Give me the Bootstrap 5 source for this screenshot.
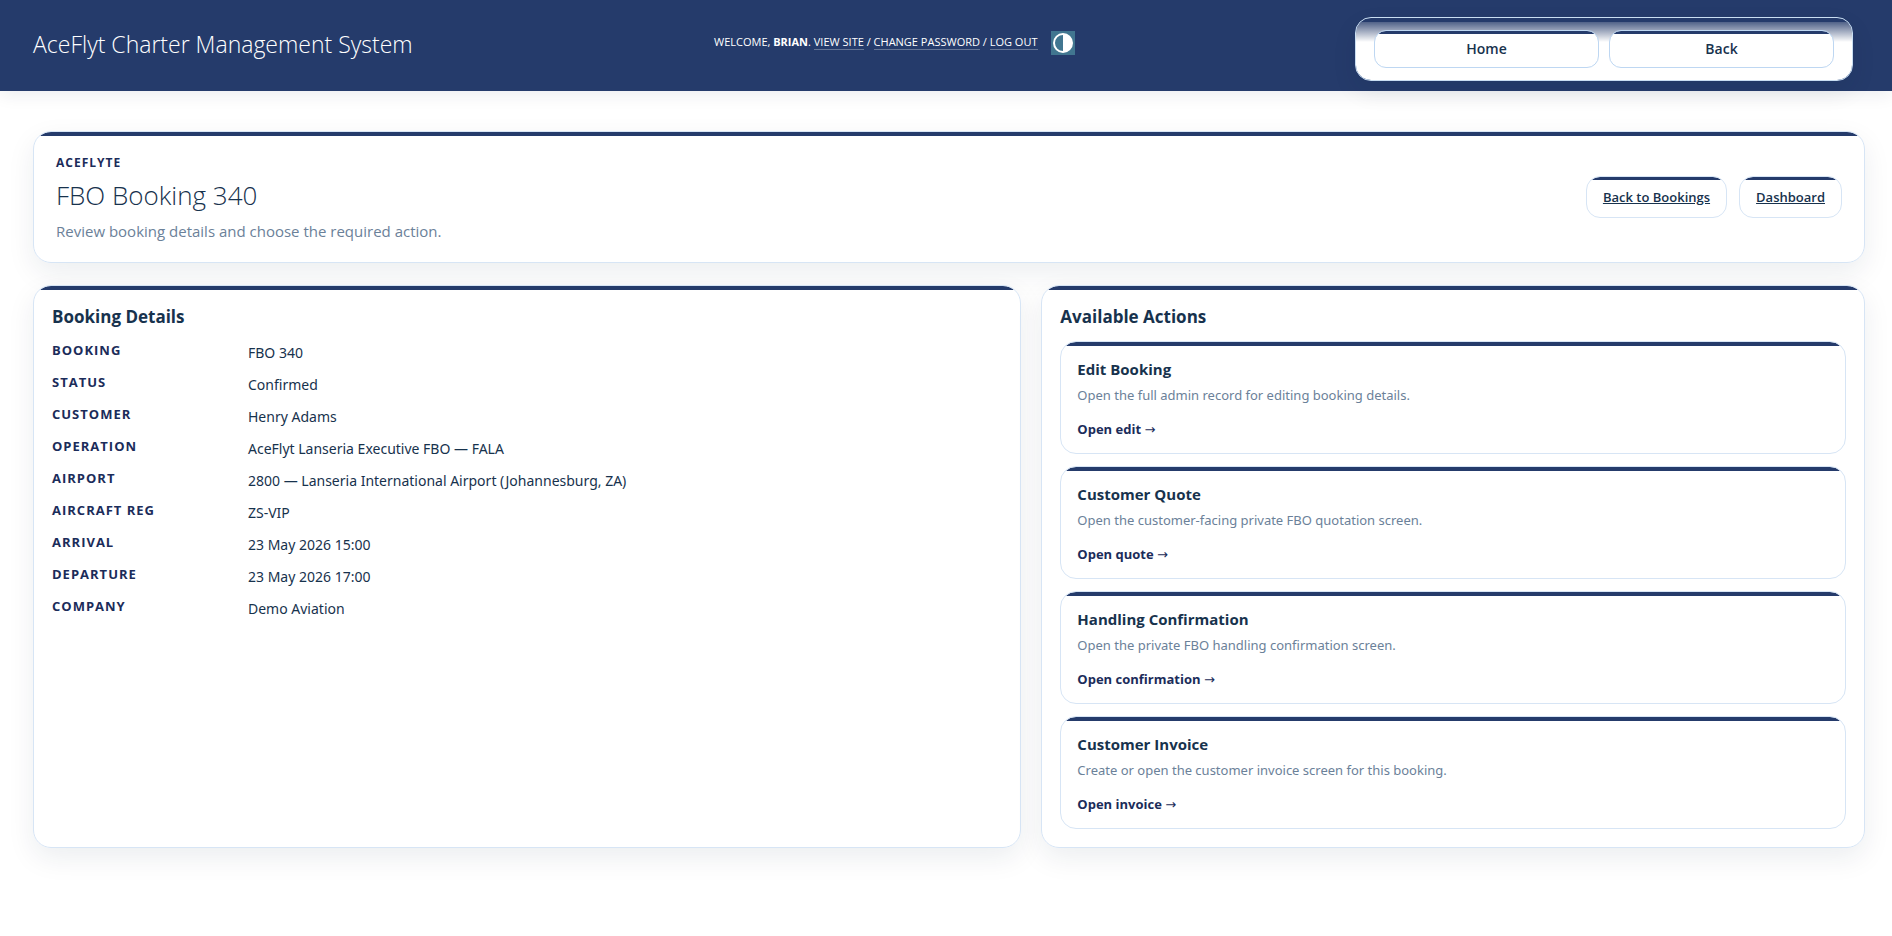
<!DOCTYPE html>
<html lang="en">
<head>
<meta charset="utf-8">
<meta name="viewport" content="width=device-width, initial-scale=1">
<title>FBO Booking 340 | AceFlyt Charter Management System</title>
<link href="https://cdn.jsdelivr.net/npm/bootstrap@5.3.0/dist/css/bootstrap.min.css" rel="stylesheet">
<style>
  :root { --navy: #253b6b; --ink: #17324d; --deep: #1b2c5a; --soft: #6b8199; --line: #d7e5f5; }
  body { font-family: "Open Sans", "Noto Sans", sans-serif; font-size: 14px; color: var(--ink); background: #fff; }
  .site-header { display: grid; grid-template-columns: 681fr 641fr 498fr; height: 91px; padding: 0 39px 0 33px; background: var(--navy); box-shadow: 0 4px 16px rgba(15, 35, 60, .08); }
  .site-title { font-size: 23px; font-weight: 300; line-height: 30px; color: #fff; padding-top: 29px; }
  .user-tools { font-size: 11px; line-height: 14px; color: #fff; padding-top: 31px; text-transform: uppercase; }
  .user-tools a { color: #fff; text-decoration: none; border-bottom: 1px solid rgba(255, 255, 255, .3); }
  .theme-toggle { width: 24px; height: 24px; background: #417690; margin-left: 13px; }
  .theme-toggle svg { display: block; }
  .surface { border: 1px solid var(--line); background: linear-gradient(var(--navy) 0 4px, #fff 4px) padding-box; }
  .raised { border-radius: 18px; box-shadow: 0 10px 28px rgba(15, 35, 60, .08); }
  .nav-panel { margin-top: 17px; height: 64px; padding: 12px 18px; gap: 10px; border: 1px solid #c9def2; border-radius: 16px; background: linear-gradient(var(--navy) 0 4px, rgba(255, 255, 255, .2) 4px, #fff 24px) padding-box; box-shadow: 0 10px 24px rgba(15, 35, 60, .09); }
  .nav-panel button { flex: 1 1 0; padding: 0 0 2px; color: var(--ink); font-size: 14px; font-weight: 600; border: 1px solid #bed7f2; border-radius: 12px; background: linear-gradient(var(--navy) 0 3px, #fff 3px) padding-box; }
  .page-body { padding: 40px 27px 40px 33px; }
  .hero { padding: 20px 22px; margin-bottom: 22px; }
  .eyebrow { font-size: 12px; line-height: 22px; font-weight: 700; letter-spacing: 1px; color: var(--deep); }
  .hero h1 { font-size: 26px; line-height: 34px; font-weight: 300; margin: 4px 0 8px; }
  .hero p { font-size: 15px; line-height: 22px; color: var(--soft); margin: 0; }
  .hero-link { font-size: 13px; line-height: 20px; font-weight: 600; color: var(--ink); padding: 10px 16px; border: 1px solid var(--line); border-radius: 14px; background: linear-gradient(var(--navy) 0 3px, #fff 3px) padding-box; }
  .panels { display: grid; grid-template-columns: 12fr 10fr; gap: 20px; }
  .panel { padding: 18px; }
  .panel h2 { font-size: 17px; line-height: 26px; font-weight: 700; margin: 0 0 11px; }
  .facts { display: grid; grid-template-columns: 180px 1fr; grid-auto-rows: 32px; column-gap: 16px; margin: 0; }
  .facts dt { font-size: 13px; line-height: 18px; font-weight: 700; letter-spacing: 1px; text-transform: uppercase; color: var(--deep); }
  .facts dd { font-family: "Noto Sans", sans-serif; font-size: 14px; line-height: 24px; margin: 0; }
  .actions { gap: 12px; }
  .action { display: block; border-radius: 16px; padding: 16px 16px 14px; color: var(--ink); text-decoration: none; }
  .action h3 { font-size: 15px; line-height: 22px; font-weight: 700; margin: 0 0 5px; }
  .action p { font-family: "Noto Sans", sans-serif; font-size: 13px; line-height: 20px; color: var(--soft); margin: 0 0 14px; }
  .action-cta { font-size: 13px; line-height: 20px; height: 20px; font-weight: 700; color: var(--deep); }
  .arrow { font-family: "DejaVu Sans", sans-serif; font-weight: 400; line-height: 1; }
</style>
</head>
<body>
<header class="site-header">
  <div class="site-title">AceFlyt Charter Management System</div>
  <div class="user-tools d-flex align-items-start">
    <div class="pt-1">Welcome, <strong>Brian</strong>. <a href="#">View site</a> / <a href="#">Change password</a> / <a href="#">Log out</a></div>
    <button type="button" class="theme-toggle border-0 p-0" aria-label="Toggle theme">
      <svg width="24" height="24" viewBox="0 0 24 24"><circle cx="12" cy="12" r="9" fill="none" stroke="#fff" stroke-width="2"/><path d="M12 3a9 9 0 0 1 0 18z" fill="#fff"/></svg>
    </button>
  </div>
  <nav class="nav-panel d-flex">
    <button type="button">Home</button>
    <button type="button">Back</button>
  </nav>
</header>
<main class="page-body">
  <section class="surface raised hero d-flex justify-content-between">
    <div>
      <div class="eyebrow">ACEFLYTE</div>
      <h1>FBO Booking 340</h1>
      <p>Review booking details and choose the required action.</p>
    </div>
    <div class="d-flex align-items-center align-self-center gap-2">
      <a class="hero-link" href="#">Back to Bookings</a>
      <a class="hero-link ms-1" href="#">Dashboard</a>
    </div>
  </section>
  <div class="panels">
    <section class="surface raised panel">
      <h2>Booking Details</h2>
      <dl class="facts">
        <dt>Booking</dt><dd>FBO 340</dd>
        <dt>Status</dt><dd>Confirmed</dd>
        <dt>Customer</dt><dd>Henry Adams</dd>
        <dt>Operation</dt><dd>AceFlyt Lanseria Executive FBO — FALA</dd>
        <dt>Airport</dt><dd>2800 — Lanseria International Airport (Johannesburg, ZA)</dd>
        <dt>Aircraft Reg</dt><dd>ZS-VIP</dd>
        <dt>Arrival</dt><dd>23 May 2026 15:00</dd>
        <dt>Departure</dt><dd>23 May 2026 17:00</dd>
        <dt>Company</dt><dd>Demo Aviation</dd>
      </dl>
    </section>
    <section class="surface raised panel">
      <h2>Available Actions</h2>
      <div class="d-grid actions">
        <a class="surface action" href="#"><h3>Edit Booking</h3><p>Open the full admin record for editing booking details.</p><div class="action-cta">Open edit <span class="arrow">→</span></div></a>
        <a class="surface action" href="#"><h3>Customer Quote</h3><p>Open the customer-facing private FBO quotation screen.</p><div class="action-cta">Open quote <span class="arrow">→</span></div></a>
        <a class="surface action" href="#"><h3>Handling Confirmation</h3><p>Open the private FBO handling confirmation screen.</p><div class="action-cta">Open confirmation <span class="arrow">→</span></div></a>
        <a class="surface action" href="#"><h3>Customer Invoice</h3><p>Create or open the customer invoice screen for this booking.</p><div class="action-cta">Open invoice <span class="arrow">→</span></div></a>
      </div>
    </section>
  </div>
</main>
<script src="https://cdn.jsdelivr.net/npm/bootstrap@5.3.0/dist/js/bootstrap.bundle.min.js"></script>
</body>
</html>
